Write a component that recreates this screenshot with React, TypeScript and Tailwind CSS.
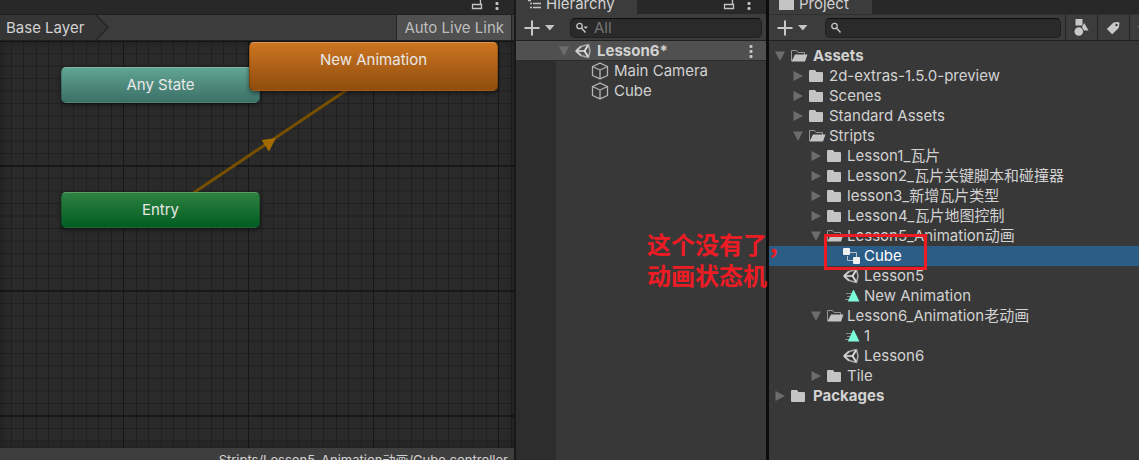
import type { ReactNode } from "react";

type IconName = "folder" | "open" | "scene" | "clip" | "controller" | "cube";

function FolderIcon() {
  return (
    <svg width="18" height="16" viewBox="0 0 18 16" aria-hidden="true">
      <path d="M1 3q0-1 1-1h4.500q.8 0 1.200.8l.6 1.200H14q1 0 1 1v8q0 1-1 1H2q-1 0-1-1z" fill="#c4c4c4" />
    </svg>
  );
}

function OpenFolderIcon() {
  return (
    <svg width="18" height="16" viewBox="0 0 18 16" aria-hidden="true">
      <path d="M1.500 13V2.500h5l1.500 2h6.500V7" fill="none" stroke="#969696" />
      <path d="M5 6.500h12.500L15 13.500H1.500z" fill="#c4c4c4" />
    </svg>
  );
}

function SceneIcon() {
  return (
    <svg width="18" height="16" viewBox="0 0 18 16" aria-hidden="true">
      <path d="M1 8 6 3.500 13.500 1.500 15 8 13.500 14.500 6 12.500z" fill="none" stroke="#a8a8a8" strokeWidth="1.500" strokeLinejoin="round" />
      <path d="M1 8 6 3.500M1 8l5 4.500" fill="none" stroke="#c8c8c8" strokeWidth="1.800" />
      <path d="M2 8h7.500M9.500 8l3.500-5.500M9.500 8l3.500 5.500" fill="none" stroke="#e6e6e6" strokeWidth="1.700" />
    </svg>
  );
}

function ClipIcon() {
  return (
    <svg width="18" height="16" viewBox="0 0 18 16" aria-hidden="true">
      <path d="M3 5.500h6M4 8.500h4M2 11.500h4" stroke="#7d8b88" />
      <path d="M9.900 2.500q.6-.8 1.200 0L16.500 13.500H4.800z" fill="#7dfbdd" />
    </svg>
  );
}

function ControllerIcon() {
  return (
    <svg width="18" height="16" viewBox="0 0 18 16" aria-hidden="true">
      <path d="M7 4.500h6.500V9M4.500 8v4.500H11" fill="none" stroke="#b9c4cd" />
      <rect x="0" y="0" width="7" height="7" rx="1" fill="#f0f0f0" />
      <rect x="10" y="9" width="7" height="7" rx="1" fill="#f0f0f0" />
    </svg>
  );
}

function CubeIcon() {
  return (
    <svg width="18" height="18" viewBox="0 0 18 18" aria-hidden="true">
      <path d="M9 1.200 16.500 4.500v9L9 16.800 1.500 13.500v-9zM1.500 4.500 9 8l7.500-3.500M9 8v8.800" fill="none" stroke="#b4b4b4" strokeWidth="1.300" strokeLinejoin="round" />
    </svg>
  );
}

function ItemIcon({ name }: { name: IconName }) {
  if (name === "folder") return <FolderIcon />;
  if (name === "open") return <OpenFolderIcon />;
  if (name === "scene") return <SceneIcon />;
  if (name === "clip") return <ClipIcon />;
  if (name === "controller") return <ControllerIcon />;
  return <CubeIcon />;
}

function FoldArrow({ open }: { open: boolean }) {
  return (
    <svg width="10" height="10" viewBox="0 0 10 10" aria-hidden="true">
      <path d={open ? "M0 .5h10L5 10z" : "M.5 0v10L10 5z"} fill="#6c6c6c" />
    </svg>
  );
}

function LockIcon() {
  return (
    <svg width="12" height="12" viewBox="0 0 12 12" aria-hidden="true">
      <path d="M1.500 6.500h9v4h-9zM9.500 6V3q0-2-2-2" fill="none" stroke="#c4c4c4" strokeWidth="1.300" />
    </svg>
  );
}

function DotsIcon() {
  return (
    <svg width="4" height="14" viewBox="0 0 4 14" aria-hidden="true" fill="#c4c4c4">
      <rect x=".5" y="1" width="3" height="3" rx="1" />
      <rect x=".5" y="6" width="3" height="3" rx="1" />
      <rect x=".5" y="11" width="3" height="3" rx="1" />
    </svg>
  );
}

function TabActions() {
  return (
    <div className="ml-auto flex items-end gap-3 pr-[15px]">
      <button aria-label="Lock" className="pb-1"><LockIcon /></button>
      <button aria-label="Panel menu" className="pb-1"><DotsIcon /></button>
    </div>
  );
}

function AddButton() {
  return (
    <button aria-label="Create" className="flex w-8 shrink-0 items-center">
      <svg width="32" height="16" viewBox="0 0 32 16" aria-hidden="true">
        <path d="M8 .5v15M.5 8h15" stroke="#c8c8c8" strokeWidth="2" />
        <path d="M21 5h9.500l-4.700 5.500z" fill="#c4c4c4" />
      </svg>
    </button>
  );
}

function SearchBox({ label, placeholder, menu }: { label: string; placeholder?: string; menu?: boolean }) {
  return (
    <label className="flex h-5 min-w-0 flex-1 items-center gap-[5px] rounded-[5px] border border-[#212121] border-t-[#0d0d0d] bg-[#2a2a2a] pl-1">
      <svg width="14" height="14" viewBox="0 0 14 14" aria-hidden="true" className="shrink-0">
        <circle cx="4.500" cy="5" r="2.700" fill="none" stroke="#c4c4c4" strokeWidth="1.300" />
        <path d="m6.500 7 4 4.500" stroke="#c4c4c4" strokeWidth="1.500" />
        {menu && <path d="M8.500 5.500h4.500l-2.200 2.500z" fill="#c4c4c4" />}
      </svg>
      <input aria-label={label} placeholder={placeholder} className="h-full w-full min-w-0 bg-transparent outline-none placeholder:text-[#757575]" />
    </label>
  );
}

function Panel({ tab, children, className }: { tab: ReactNode; children: ReactNode; className: string }) {
  return (
    <section className={`flex min-w-0 flex-col overflow-hidden bg-[#383838] ${className}`}>
      <div className="flex h-[14px] shrink-0 items-end bg-[#282828]">
        {tab}
      </div>
      {children}
    </section>
  );
}

const depthPadding = ["pl-[6px]", "pl-6", "pl-[42px]", "pl-[59px]"];

type Item = { label: string; depth: number; icon: IconName; fold?: "open" | "closed"; selected?: boolean };

const assets: Item[] = [
  { label: "Assets", depth: 0, icon: "open", fold: "open" },
  { label: "2d-extras-1.5.0-preview", depth: 1, icon: "folder", fold: "closed" },
  { label: "Scenes", depth: 1, icon: "folder", fold: "closed" },
  { label: "Standard Assets", depth: 1, icon: "folder", fold: "closed" },
  { label: "Stripts", depth: 1, icon: "open", fold: "open" },
  { label: "Lesson1_瓦片", depth: 2, icon: "folder", fold: "closed" },
  { label: "Lesson2_瓦片关键脚本和碰撞器", depth: 2, icon: "folder", fold: "closed" },
  { label: "lesson3_新增瓦片类型", depth: 2, icon: "folder", fold: "closed" },
  { label: "Lesson4_瓦片地图控制", depth: 2, icon: "folder", fold: "closed" },
  { label: "Lesson5_Animation动画", depth: 2, icon: "open", fold: "open" },
  { label: "Cube", depth: 3, icon: "controller", selected: true },
  { label: "Lesson5", depth: 3, icon: "scene" },
  { label: "New Animation", depth: 3, icon: "clip" },
  { label: "Lesson6_Animation老动画", depth: 2, icon: "open", fold: "open" },
  { label: "1", depth: 3, icon: "clip" },
  { label: "Lesson6", depth: 3, icon: "scene" },
  { label: "Tile", depth: 2, icon: "folder", fold: "closed" },
  { label: "Packages", depth: 0, icon: "folder", fold: "closed" },
];

function AssetRow({ item }: { item: Item }) {
  return (
    <li className={`flex h-5 items-center ${depthPadding[item.depth]} ${item.selected ? "bg-[#2c5d87] text-white" : ""}`}>
      {item.fold ? (
        <button aria-label={`Toggle ${item.label}`} aria-expanded={item.fold === "open"} className="mr-[5px] w-[10px] shrink-0">
          <FoldArrow open={item.fold === "open"} />
        </button>
      ) : (
        <span className="w-[15px] shrink-0" />
      )}
      <button className={`flex items-center whitespace-nowrap ${item.depth === 0 ? "gap-[5px] font-bold" : "gap-[3px]"}`}>
        <ItemIcon name={item.icon} />
        {item.label}
      </button>
    </li>
  );
}

function StateNode({ label, className }: { label: string; className: string }) {
  return (
    <button className={`absolute flex justify-center rounded-[5px] border border-black/20 text-[#e8e8e8] shadow-[0_2px_4px_rgba(0,0,0,0.5)] ${className}`}>
      {label}
    </button>
  );
}

function Animator() {
  return (
    <Panel tab={<TabActions />} className="border-r-2 border-[#191919]">
      <div className="flex h-[27px] shrink-0 border-y border-[#202020] bg-[#3c3c3c]">
        <button className="flex items-center bg-[#353535] pl-[6px] pr-1">Base Layer</button>
        <svg width="22" height="25" viewBox="0 0 22 25" aria-hidden="true">
          <path d="M0 0h8l12 12.500L8 25H0z" fill="#353535" />
          <path d="m8 0 12 12.500L8 25" fill="none" stroke="#242424" strokeWidth="1.300" />
        </svg>
        <button className="ml-auto mr-[2px] border-x border-[#242424] bg-[#505050] px-[7px] text-[#bdbdbd]">Auto Live Link</button>
      </div>
      <div className="relative min-h-0 flex-1 overflow-hidden bg-[#2a2a2a]">
        <svg width="100%" height="100%" className="absolute inset-0" aria-hidden="true">
          <defs>
            <pattern id="grid" x="123" y="124" width="125" height="125" patternUnits="userSpaceOnUse">
              <path d="M13.500 0v125M25.500 0v125M38.500 0v125M50.500 0v125M63.500 0v125M75.500 0v125M88.500 0v125M100.500 0v125M113.500 0v125M0 13.500h125M0 26h125M0 38.500h125M0 51h125M0 63.500h125M0 76h125M0 88.500h125M0 101h125M0 113.500h125" stroke="#202020" />
              <path d="M.5 0v125" stroke="#171717" />
              <path d="M0 1h125" stroke="#181818" strokeWidth="2" />
            </pattern>
          </defs>
          <rect width="100%" height="100%" fill="url(#grid)" />
          <path d="M180 161 360 40" stroke="#765000" strokeWidth="3" />
          <path d="m261.500 99 14.500-2-7 13.500z" fill="#a36a00" />
        </svg>
        <div className="absolute inset-0 shadow-[inset_0_0_10px_rgba(0,0,0,0.35)]" />
        <StateNode label="Any State" className="left-[61px] top-[26px] h-9 w-[199px] items-center border-t-[#82b5a5] bg-linear-to-b from-[#60a592] to-[#3c7067]" />
        <StateNode label="New Animation" className="left-[249px] top-px h-[49px] w-[249px] border-t-[#e19a56] bg-linear-to-b from-[#cd7521] to-[#8f4d0d] pt-[7px]" />
        <StateNode label="Entry" className="left-[61px] top-[151px] h-9 w-[199px] items-center border-t-[#5b9c6a] bg-linear-to-b from-[#2b8240] to-[#005d24]" />
      </div>
      <footer className="flex h-3 shrink-0 justify-end overflow-hidden bg-[#3e3e3e] pr-[6px] text-[13px] leading-6">
        <span className="whitespace-nowrap">Stripts/Lesson5_Animation动画/Cube.controller</span>
      </footer>
    </Panel>
  );
}

function Hierarchy() {
  return (
    <Panel
      className="border-r-[3px] border-[#0c0c0c]"
      tab={
        <>
          <button className="flex items-end gap-1 bg-[#3c3c3c] pl-3 pr-[22px]">
            <svg width="14" height="20" viewBox="0 0 14 20" aria-hidden="true">
              <path d="M5 9.500h8M5 13.500h8" stroke="#c4c4c4" strokeWidth="1.300" />
              <path d="M0 6.500h3M2 9.500h2M2 13.500h2" stroke="#c4c4c4" strokeWidth="1.300" />
            </svg>
            Hierarchy
          </button>
          <TabActions />
        </>
      }
    >
      <div className="flex h-[27px] shrink-0 items-center gap-3 border-y border-b-[#202020] border-t-[#3c3c3c] bg-[#3c3c3c] pl-2 pr-1">
        <AddButton />
        <div className="flex min-w-0 flex-1 pl-[2px]"><SearchBox label="Search hierarchy" placeholder="All" menu /></div>
      </div>
      <div className="flex h-5 shrink-0 items-center border-b border-[#2b2b2b] bg-[#505050] pl-[43px] pr-[13px] font-bold">
        <button aria-label="Toggle Lesson6" aria-expanded="true" className="mr-[6px]"><FoldArrow open /></button>
        <button className="flex items-center gap-1"><SceneIcon />Lesson6*</button>
        <button aria-label="Scene menu" className="ml-auto"><DotsIcon /></button>
      </div>
      <div className="flex min-h-0 flex-1">
        <div className="w-10 shrink-0 bg-[#2d2d2d]" />
        <ul className="min-w-0 flex-1 pl-[35px]">
          {["Main Camera", "Cube"].map((name) => (
            <li key={name} className="h-5">
              <button className="flex h-5 items-center gap-[5px] whitespace-nowrap"><CubeIcon />{name}</button>
            </li>
          ))}
        </ul>
      </div>
    </Panel>
  );
}

function Project() {
  return (
    <Panel
      className=""
      tab={
        <button className="flex items-end gap-1 bg-[#3c3c3c] pl-[9px] pr-[23px]">
          <svg width="17" height="20" viewBox="0 0 17 20" aria-hidden="true">
            <path d="M1 0h6l2 5h7v11H1z" fill="#c4c4c4" />
          </svg>
          Project
        </button>
      }
    >
      <div className="flex h-[27px] shrink-0 items-center border-y border-b-[#202020] border-t-[#303030] bg-[#3c3c3c] pl-2">
        <AddButton />
        <div className="flex min-w-0 flex-1 pl-4 pr-1"><SearchBox label="Search project" /></div>
        <button aria-label="Filter by type" className="flex h-full w-8 shrink-0 items-center justify-center border-l border-[#242424]">
          <svg width="16" height="18" viewBox="0 0 16 18" fill="#c8c8c8" aria-hidden="true">
            <path d="M1.500 0H8.500v6.500h-7zM10.200 4 14.500 11.500h-4.500L8 8z" />
            <circle cx="4.800" cy="12.500" r="4.300" />
          </svg>
        </button>
        <button aria-label="Filter by label" className="flex h-full w-8 shrink-0 items-center justify-center border-l border-[#242424]">
          <svg width="16" height="16" viewBox="0 0 16 16" aria-hidden="true">
            <path d="M7.500 2.500 12 2q1.500 0 1.500 1.500l-.8 4.500-6.500 6.200L.8 9z" fill="#c8c8c8" />
            <circle cx="10.500" cy="5" r="1.200" fill="#3c3c3c" />
          </svg>
        </button>
        <button aria-label="Favourites" className="flex h-full w-[10px] shrink-0 items-center overflow-hidden border-l border-[#242424] pl-[7px]">
          <svg width="16" height="16" viewBox="0 0 16 16" className="shrink-0" aria-hidden="true">
            <path d="m8 1 2 5 5.500.3-4.300 3.400L12.700 15 8 12l-4.700 3 1.500-5.300L.5 6.300 6 6z" fill="#999999" />
          </svg>
        </button>
      </div>
      <ul className="pt-[5px]">
        {assets.map((item) => <AssetRow key={item.label + item.depth + item.icon} item={item} />)}
      </ul>
    </Panel>
  );
}

export default function App() {
  return (
    <main className="relative grid h-screen grid-cols-[516fr_253fr_370fr] overflow-hidden bg-[#282828] font-['Inter','Noto_Sans_CJK_SC',sans-serif] text-[15px] leading-5 text-[#d2d2d2]">
      <Animator />
      <Hierarchy />
      <Project />
      <p className="pointer-events-none absolute left-[647px] top-[228px] whitespace-nowrap font-['Noto_Sans_CJK_SC',sans-serif] text-2xl font-bold leading-[31px] text-[#ed1c24]">
        这个没有了，
        <br />
        动画状态机
      </p>
      <div className="pointer-events-none absolute left-[824px] top-[234px] h-9 w-[103px] border-[3px] border-[#ed1c24]" />
    </main>
  );
}
